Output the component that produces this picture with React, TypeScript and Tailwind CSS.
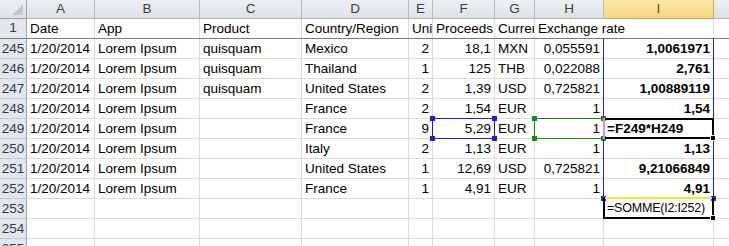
import React from "react";

type Col = { key: string; w: string; num?: boolean; bold?: boolean };

const cols: Col[] = [
  { key: "A", w: "w-[68px]" },
  { key: "B", w: "w-[105px]" },
  { key: "C", w: "w-[102px]" },
  { key: "D", w: "w-[107px]" },
  { key: "E", w: "w-[24px]", num: true },
  { key: "F", w: "w-[62px]", num: true },
  { key: "G", w: "w-[40px]" },
  { key: "H", w: "w-[69px]", num: true },
  { key: "I", w: "w-[110px]", num: true, bold: true },
  { key: "J", w: "w-[64px]" },
];

const rows: { n: string; cells: string[] }[] = [
  { n: "245", cells: ["1/20/2014", "Lorem Ipsum", "quisquam", "Mexico", "2", "18,1", "MXN", "0,055591", "1,0061971", ""] },
  { n: "246", cells: ["1/20/2014", "Lorem Ipsum", "quisquam", "Thailand", "1", "125", "THB", "0,022088", "2,761", ""] },
  { n: "247", cells: ["1/20/2014", "Lorem Ipsum", "quisquam", "United States", "2", "1,39", "USD", "0,725821", "1,00889119", ""] },
  { n: "248", cells: ["1/20/2014", "Lorem Ipsum", "", "France", "2", "1,54", "EUR", "1", "1,54", ""] },
  { n: "249", cells: ["1/20/2014", "Lorem Ipsum", "", "France", "9", "5,29", "EUR", "1", "", ""] },
  { n: "250", cells: ["1/20/2014", "Lorem Ipsum", "", "Italy", "2", "1,13", "EUR", "1", "1,13", ""] },
  { n: "251", cells: ["1/20/2014", "Lorem Ipsum", "", "United States", "1", "12,69", "USD", "0,725821", "9,21066849", ""] },
  { n: "252", cells: ["1/20/2014", "Lorem Ipsum", "", "France", "1", "4,91", "EUR", "1", "4,91", ""] },
  { n: "253", cells: ["", "", "", "", "", "", "", "", "", ""] },
  { n: "254", cells: ["", "", "", "", "", "", "", "", "", ""] },
  { n: "255", cells: ["", "", "", "", "", "", "", "", "", ""] },
];

const header = ["Date", "App", "Product", "Country/Region", "Units", "Proceeds", "Currency", "Exchange rate", "", ""];

function Handle({ pos, color }: { pos: string; color: string }) {
  return <span className={`absolute z-20 w-[5px] h-[5px] ${pos} ${color}`} />;
}

function Overlay({ row, col }: { row: string; col: string }) {
  const n = Number(row);
  const out: React.ReactNode[] = [];
  if (col === "I" && n >= 245 && n <= 252) {
    out.push(<span key="l" className="absolute z-10 -top-px -bottom-px -left-px w-px bg-[#1c1ce6]" />);
    out.push(<span key="r" className="absolute z-10 -top-px -bottom-px -right-px w-px bg-[#1c1ce6]" />);
  }
  if (col === "I" && n === 252) {
    out.push(<Handle key="h1" pos="-bottom-[3px] -left-[3px]" color="bg-[#1c1ce6]" />);
    out.push(<Handle key="h2" pos="-bottom-[3px] -right-[3px]" color="bg-[#1c1ce6]" />);
  }
  if (col === "F" && n === 249) {
    out.push(<span key="b" className="absolute z-10 -inset-px border border-[#1c1ce6]" />);
    out.push(<Handle key="a" pos="-top-[3px] -left-[3px]" color="bg-[#1c1ce6]" />);
    out.push(<Handle key="b2" pos="-top-[3px] -right-[3px]" color="bg-[#1c1ce6]" />);
    out.push(<Handle key="c" pos="-bottom-[3px] -left-[3px]" color="bg-[#1c1ce6]" />);
    out.push(<Handle key="d" pos="-bottom-[3px] -right-[3px]" color="bg-[#1c1ce6]" />);
  }
  if (col === "H" && n === 249) {
    out.push(<span key="b" className="absolute z-10 -inset-px border border-[#138a13]" />);
    out.push(<Handle key="a" pos="-top-[3px] -left-[3px]" color="bg-[#138a13]" />);
    out.push(<Handle key="b2" pos="-top-[3px] -right-[3px]" color="bg-[#138a13]" />);
    out.push(<Handle key="c" pos="-bottom-[3px] -left-[3px]" color="bg-[#138a13]" />);
    out.push(<Handle key="d" pos="-bottom-[3px] -right-[3px]" color="bg-[#138a13]" />);
  }
  if (col === "I" && n === 249) {
    out.push(<span key="b" className="absolute z-20 -inset-px border-2 border-l-0 border-black" />);
    out.push(<span key="p" className="absolute z-20 -top-px -bottom-px -left-px w-[2px] bg-[#f07ef0]" />);
    out.push(<span key="f" className="absolute z-30 -bottom-[3px] -right-[3px] w-[6px] h-[6px] bg-black border border-white" />);
  }
  if (col === "I" && n === 253) {
    out.push(<span key="b" className="absolute z-20 -inset-px border-2 border-t-0 border-black" />);
    out.push(<span key="y" className="absolute z-20 -top-[2px] left-px right-px h-[2px] bg-[#f5e62a]" />);
    out.push(<span key="f" className="absolute z-30 -bottom-[3px] -right-[3px] w-[6px] h-[6px] bg-black border border-white" />);
  }
  return <>{out}</>;
}

function cellText(row: string, col: string, value: string) {
  if (col === "I" && row === "249") return "=F249*H249";
  if (col === "I" && row === "253") return "=SOMME(I2:I252)";
  return value;
}

export default function App() {
  return (
    <div className="w-[729px] h-[246px] overflow-hidden bg-white font-['Liberation_Sans',Arial,sans-serif] text-[13.5px] text-black">
      {/* column headers */}
      <div className="flex h-[19px]">
        <div className="relative shrink-0 w-[27px] border-r border-b border-[#9da3ab] bg-gradient-to-b from-[#eef0f3] to-[#dde1e6]">
          <span className="absolute right-[3px] bottom-[3px] w-0 h-0 border-l-[11px] border-l-transparent border-b-[11px] border-b-[#c4c8ce]" />
        </div>
        {cols.map((c) => (
          <div
            key={c.key}
            className={`${c.w} shrink-0 flex items-center justify-center border-r border-b text-[13.5px] leading-none ${
              c.key === "I"
                ? "bg-gradient-to-b from-[#fde9a9] to-[#f9d680] border-[#d8a447] text-[#5a4a2a]"
                : "bg-gradient-to-b from-[#eef0f3] to-[#dde1e6] border-[#b4b9c0] text-[#3c3f44]"
            }`}
          >
            {c.key}
          </div>
        ))}
      </div>

      {/* row 1 (frozen) */}
      <div className="flex h-5 border-b border-[#7d7d7d]">
        <div className="shrink-0 w-[27px] flex items-center justify-center border-r border-[#9da3ab] bg-[#e3e7ec] text-[#2e3d52]">
          1
        </div>
        {cols.map((c, i) => (
          <div
            key={c.key}
            className={`${c.w} shrink-0 h-[19px] leading-[19px] pl-[3px] whitespace-nowrap ${
              c.key === "H" ? "overflow-visible relative z-10" : "overflow-hidden border-r border-[#dadada]"
            }`}
          >
            {header[i]}
          </div>
        ))}
      </div>

      {rows.map((r) => (
        <div key={r.n} className="flex h-5">
          <div className="shrink-0 w-[27px] flex items-center justify-center border-r border-b border-[#9da3ab] border-b-[#c5cad1] bg-[#e3e7ec] text-[#2e3d52] leading-none">
            {r.n}
          </div>
          {cols.map((c, i) => {
            const text = cellText(r.n, c.key, r.cells[i]);
            const editing = c.key === "I" && (r.n === "249" || r.n === "253");
            return (
              <div
                key={c.key}
                className={`${c.w} relative shrink-0 h-5 border-r border-b border-[#dadada] leading-[19px] whitespace-nowrap ${
                  c.num && !editing ? "text-right pr-[3px]" : "pl-[3px]"
                } ${c.bold && r.n !== "253" ? "font-bold" : ""} ${r.n === "253" && c.key === "I" ? "text-[12.5px] tracking-[-0.2px]" : ""}`}
              >
                <span className={`block ${editing ? "overflow-visible" : "overflow-hidden"}`}>{text}</span>
                <Overlay row={r.n} col={c.key} />
              </div>
            );
          })}
        </div>
      ))}
    </div>
  );
}
